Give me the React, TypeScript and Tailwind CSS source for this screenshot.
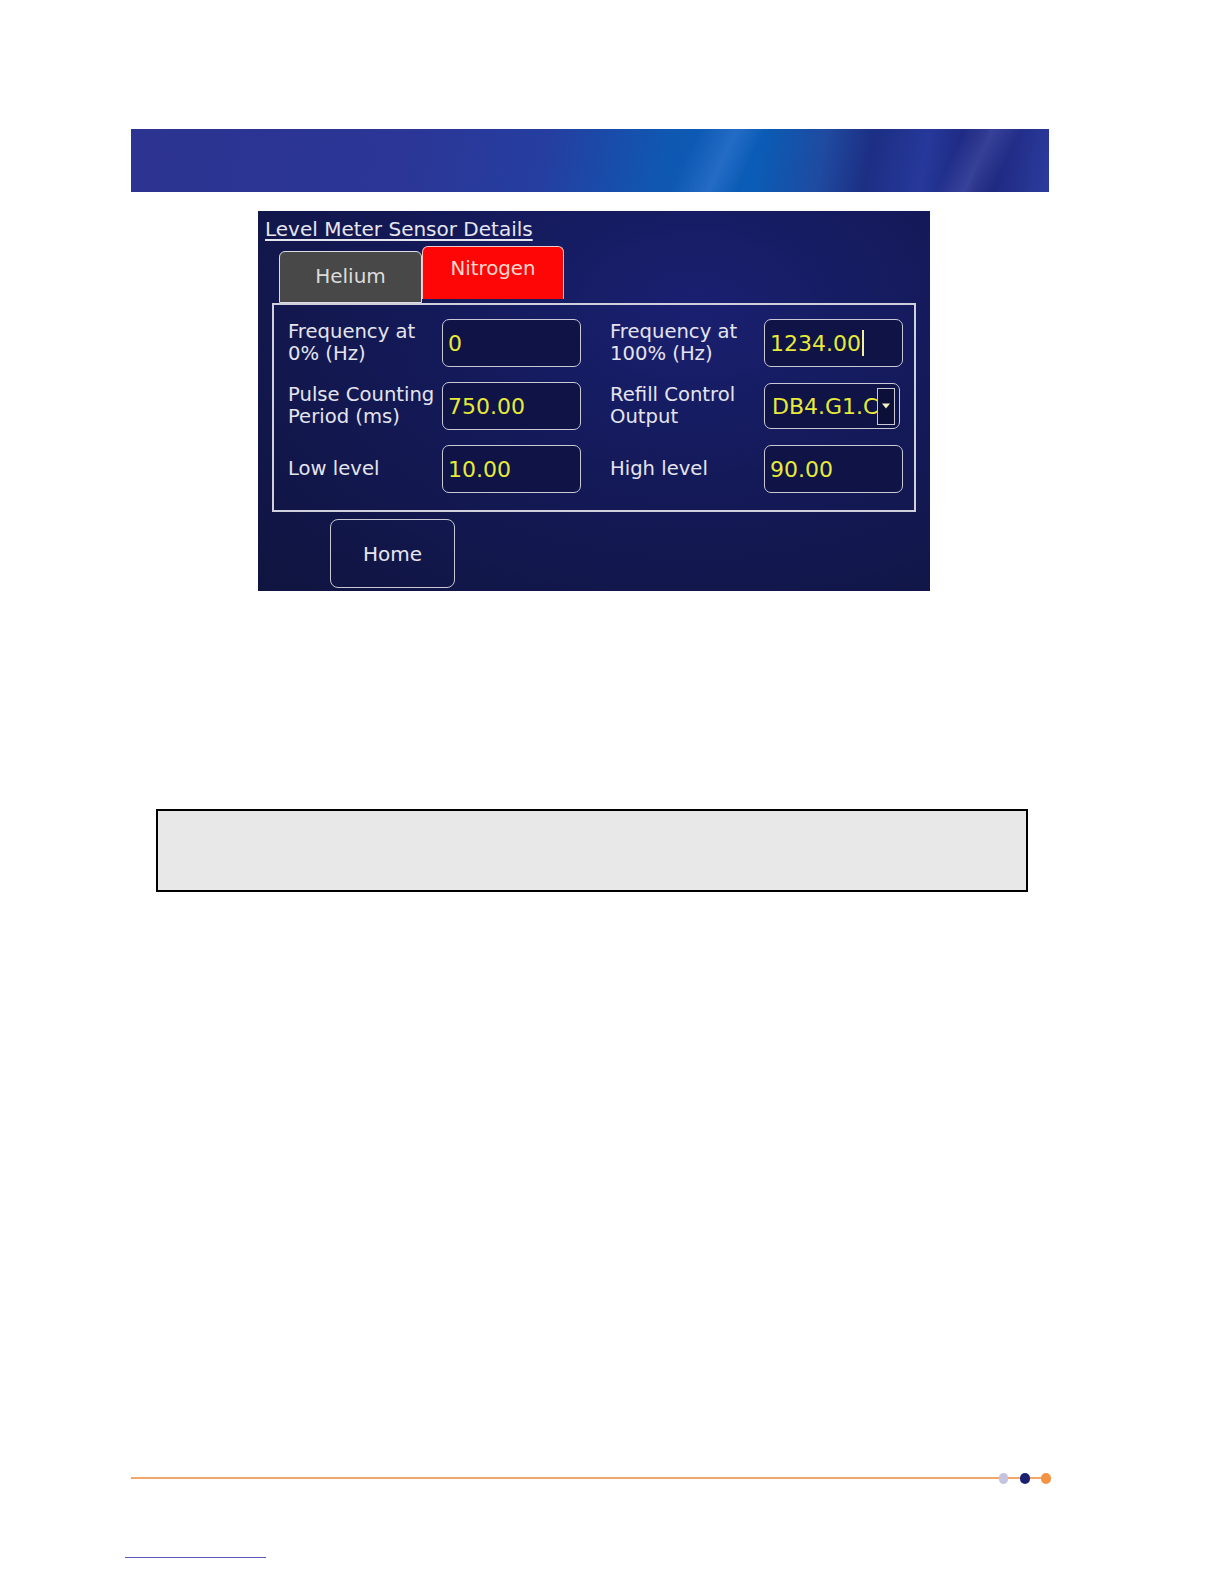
const ui = "font-['DejaVu_Sans',sans-serif]";

interface FieldProps {
  label: string[];
  value: string;
  cursor?: boolean;
}

const Label = ({ label }: { label: string[] }) => (
  <div className="w-[154px] text-[19.6px] leading-[22px] text-[#e4e4ee]">
    {label.map((l) => (
      <div key={l}>{l}</div>
    ))}
  </div>
);

const Field = ({ label, value, cursor }: FieldProps) => {
  return (
    <div className="flex items-center">
      <Label label={label} />
      <div className="flex h-[48px] w-[139px] items-center rounded-[7px] border-[1.5px] border-[#c9c9d6] bg-[#0f1345] pl-[5px] text-[22px] text-[#e6ea3a]">
        <span>{value}</span>
        {cursor && <span className="ml-[1px] h-[26px] w-[2px] bg-[#f0f0a0]" />}
      </div>
    </div>
  );
};

const SelectField = ({ label, value }: { label: string[]; value: string }) => {
  return (
    <div className="flex items-center">
      <Label label={label} />
      <div className="flex h-[46px] w-[136px] items-center rounded-[7px] border-[1.5px] border-[#c9c9d6] bg-[#0f1345] pl-[7px] pr-[4px] text-[22px] text-[#e6ea3a]">
        <span className="w-[105px] whitespace-nowrap">{value}</span>
        <div className="flex h-[37px] w-[19px] items-center justify-center border border-[#c9c9d6] bg-[#0c0f38]">
          <svg width="10" height="6" viewBox="0 0 10 6">
            <path d="M1 0.5 L9 0.5 L5 5.5 Z" fill="#f4f4c0" />
          </svg>
        </div>
      </div>
    </div>
  );
};

const Screen = () => {
  return (
    <div
      className={`ml-[258px] mt-[19px] flex h-[380px] w-[672px] flex-col bg-[radial-gradient(ellipse_at_65%_25%,#1a2070_0%,#141a5a_40%,#10143f_100%)] ${ui}`}
    >
      <div className="h-[36px] pl-[7px] pt-[3px]">
        <span className="text-[20px] text-[#e6e6f0] underline decoration-[1.5px] underline-offset-[3px]">
          Level Meter Sensor Details
        </span>
      </div>
      <div className="relative z-10 flex h-[56px] items-end pl-[21px]">
        <div className="flex h-[52px] w-[143px] items-center justify-center rounded-t-[6px] border-[1.5px] border-[#dcdce4] bg-[#484848] pb-[2px] text-[20px] text-[#dcdcdc]">
          Helium
        </div>
        <div className="mb-[4px] flex h-[53px] w-[142px] items-center justify-center rounded-t-[6px] border-[1.5px] border-b-0 border-[#f0c8c8] bg-[#ff0606] pb-[8px] text-[19.8px] text-[#ffd8d0]">
          Nitrogen
        </div>
      </div>
      <div className="ml-[14px] flex h-[209px] w-[644px] flex-col gap-[15px] border-2 border-[#d0d0dc] pl-[14px] pt-[14px]">
        <div className="flex gap-[29px]">
          <Field label={["Frequency at", "0% (Hz)"]} value="0" />
          <Field label={["Frequency at", "100% (Hz)"]} value="1234.00" cursor />
        </div>
        <div className="flex gap-[29px]">
          <Field label={["Pulse Counting", "Period (ms)"]} value="750.00" />
          <SelectField label={["Refill Control", "Output"]} value="DB4.G1.C" />
        </div>
        <div className="flex gap-[29px]">
          <Field label={["Low level"]} value="10.00" />
          <Field label={["High level"]} value="90.00" />
        </div>
      </div>
      <div className="ml-[72px] mt-[7px] flex h-[69px] w-[125px] items-center justify-center rounded-[8px] border-[1.5px] border-[#c8c8d4] text-[20px] text-[#e6e6f0]">
        Home
      </div>
    </div>
  );
};

const App = () => {
  return (
    <div className="h-screen w-full overflow-hidden bg-white">
      <div className="pt-[129px]">
        <div className="relative ml-[131px] h-[63px] w-[918px] overflow-hidden bg-[linear-gradient(100deg,#2c3390_0%,#2b3696_30%,#253ea0_45%,#0f58b2_58%,#0a5cb6_68%,#1f4aa0_75%,#1c2f84_80%,#26389a_86%,#1a2378_92%,#2c3c9e_100%)]">
          <div className="absolute inset-0 bg-[linear-gradient(115deg,transparent_60%,rgba(80,140,230,0.35)_64%,transparent_67%,transparent_88%,rgba(120,130,220,0.3)_91%,transparent_94%)]" />
        </div>
      </div>
      <Screen />
      <div className="ml-[156px] mt-[218px] h-[83px] w-[872px] border-2 border-black bg-[#e8e8e8]" />
      <div className="ml-[131px] mt-[580px] flex h-[12px] w-[920px] items-center">
        <div className="h-[2px] flex-1 bg-[#f2a66a]" />
        <div className="h-[11px] w-[9px] rounded-full bg-[#c4c4de]" />
        <div className="h-[2px] w-[12px] bg-[#f2a66a]" />
        <div className="h-[11px] w-[10px] rounded-full bg-[#1c2070]" />
        <div className="h-[2px] w-[11px] bg-[#f2a66a]" />
        <div className="h-[11px] w-[10px] rounded-full bg-[#f29444]" />
      </div>
      <div className="ml-[125px] mt-[73px] h-px w-[141px] bg-[#5a5ab8]" />
    </div>
  );
};

export default App;
